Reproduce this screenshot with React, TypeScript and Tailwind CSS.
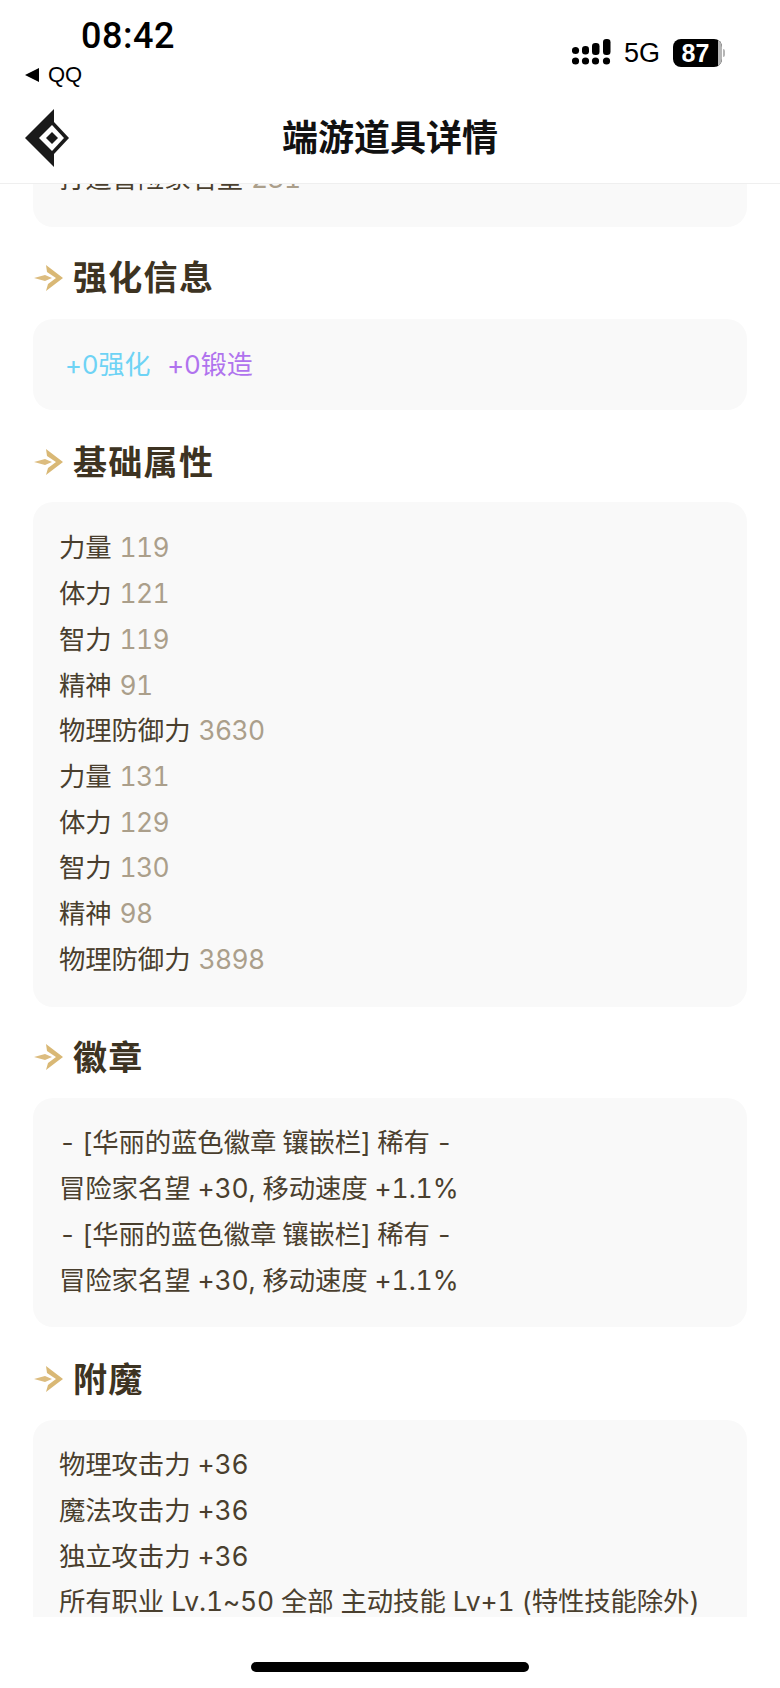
import React from 'react';

const cjk = { fontFamily: 'Inter, "Noto Sans CJK SC", sans-serif' };

function Logo() {
  return (
    <svg width="50" height="60" viewBox="0 0 50 60" className="shrink-0">
      <path d="M30 0 L30 13 L45 29 L30 45 L30 58 L1 29 Z" fill="#1a1a1a" />
      <path d="M28 16 L15 29 L28 42 L40 29 Z" fill="#fff" />
      <path d="M28 23 L22 29 L28 35 L34 29 Z" fill="#1a1a1a" />
    </svg>
  );
}

function ArrowMark() {
  return (
    <svg width="30" height="28" viewBox="0 0 30 28" className="shrink-0">
      <path d="M0 14 L11 11 L18 14 L11 17 Z" fill="#dcbc7f" />
      <path d="M12 1 L29 14 L12 27 L14 20 L22 14 L13 8 Z" fill="#d9b875" />
    </svg>
  );
}

function Heading({ title, mt }: { title: string; mt: string }) {
  return (
    <div className={`flex items-center h-[40px] pl-[34px] ${mt}`}>
      <ArrowMark />
      <h2 className="ml-[9px] text-[34px] font-bold text-[#3d3322] tracking-[1.3px]">{title}</h2>
    </div>
  );
}

function Card({ className, children }: { className?: string; children: React.ReactNode }) {
  return (
    <div className={`mx-[33px] bg-[#f9f9f9] rounded-[20px] px-[26px] text-[26.4px] leading-[45.7px] text-[#4a3f2e] tabular-nums tracking-[-0.1px] ${className ?? ''}`}>
      {children}
    </div>
  );
}

function Stat({ label, value }: { label: string; value: string }) {
  return (
    <div>
      {label} <span className="ml-[1px] text-[#ab9f8b] tracking-[-0.6px]">{value}</span>
    </div>
  );
}

const baseStats = [
  ['力量', '119'],
  ['体力', '121'],
  ['智力', '119'],
  ['精神', '91'],
  ['物理防御力', '3630'],
  ['力量', '131'],
  ['体力', '129'],
  ['智力', '130'],
  ['精神', '98'],
  ['物理防御力', '3898'],
];

export default function App() {
  return (
    <div className="w-[780px] h-[1688px] bg-white flex flex-col overflow-hidden" style={cjk}>
      {/* Status bar */}
      <div className="h-[100px] shrink-0 relative flex justify-between">
        <div className="pl-[25px]">
          <div className="pl-[56px] pt-[15px] text-[36px] leading-[42px] font-medium text-black tracking-[0.5px]" style={{ fontFamily: 'Roboto, sans-serif' }}>08:42</div>
          <div className="flex items-center gap-[9px] mt-[5px] text-[22px] leading-[26px] text-black" style={{ fontFamily: '"Liberation Sans", sans-serif' }}>
            <span className="w-0 h-0 border-y-[7px] border-y-transparent border-r-[14px] border-r-black" />
            QQ
          </div>
        </div>
        <div className="flex items-center h-[32px] mt-[37px] mr-[55px]">
          <svg width="39" height="28" viewBox="0 0 39 28">
            <circle cx="3.5" cy="11.5" r="3.6" fill="#000" />
            <circle cx="3.5" cy="22" r="3.6" fill="#000" />
            <rect x="10" y="7" width="7" height="8.5" rx="3.3" fill="#000" />
            <circle cx="13.5" cy="22" r="3.6" fill="#000" />
            <rect x="20" y="4" width="7.5" height="12" rx="3.3" fill="#000" />
            <circle cx="23.5" cy="22" r="3.6" fill="#000" />
            <rect x="31" y="0" width="7.5" height="16" rx="3.3" fill="#000" />
            <circle cx="34.5" cy="22" r="3.6" fill="#000" />
          </svg>
          <span className="ml-[13px] text-[27px] text-black" style={{ fontFamily: '"Liberation Sans", sans-serif' }}>5G</span>
          <div className="ml-[13px] relative w-[49px] h-[28px] rounded-[8px] bg-black flex items-center justify-center overflow-hidden">
            <span className="text-[25px] leading-none font-bold text-white pr-[4px]" style={{ fontFamily: '"Liberation Sans", sans-serif' }}>87</span>
            <span className="absolute right-0 inset-y-0 w-[4px] bg-[#b5b5b5]" />
          </div>
          <span className="ml-[1px] w-[2px] h-[8px] rounded-r bg-[#b5b5b5]" />
        </div>
      </div>

      {/* Title bar */}
      <div className="h-[84px] shrink-0 relative z-10 bg-white border-b border-[#efefef] flex items-center justify-center">
        <div className="absolute left-[24px] top-[9px]">
          <Logo />
        </div>
        <h1 className="text-[36px] font-bold text-[#111] -mt-[7px]">端游道具详情</h1>
      </div>

      {/* Scroll area */}
      <div className="h-[1433px] shrink-0 overflow-hidden">
        <Card className="-mt-[50px] pt-[22px] pb-[25px]">
          <Stat label="打造冒险家名望" value="231" />
        </Card>

        <Heading title="强化信息" mt="mt-[31px]" />
        <Card className="mt-[21px] py-[23px]">
          <div className="pl-[6px] flex gap-[17px] text-[26px]">
            <span className="text-[#6ed3f5]">+0强化</span>
            <span className="text-[#b073ee]">+0锻造</span>
          </div>
        </Card>

        <Heading title="基础属性" mt="mt-[32px]" />
        <Card className="mt-[20px] pt-[23px] pb-[25px]">
          {baseStats.map(([label, value], i) => (
            <Stat key={i} label={label} value={value} />
          ))}
        </Card>

        <Heading title="徽章" mt="mt-[30px]" />
        <Card className="mt-[21px] pt-[22px] pb-[24px]">
          <div className="[word-spacing:-1px]">- [华丽的蓝色徽章 镶嵌栏] 稀有 -</div>
          <div>冒险家名望 +30, 移动速度 +1.1%</div>
          <div className="[word-spacing:-1px]">- [华丽的蓝色徽章 镶嵌栏] 稀有 -</div>
          <div>冒险家名望 +30, 移动速度 +1.1%</div>
        </Card>

        <Heading title="附魔" mt="mt-[32px]" />
        <Card className="mt-[21px] pt-[22px] pb-[24px]">
          <div>物理攻击力 +36</div>
          <div>魔法攻击力 +36</div>
          <div>独立攻击力 +36</div>
          <div>所有职业 Lv.1~50 全部 主动技能 Lv+1 (特性技能除外)</div>
        </Card>
      </div>

      {/* Home indicator */}
      <div className="flex-1 flex justify-center pt-[45px]">
        <div className="w-[278px] h-[10px] rounded-full bg-black" />
      </div>
    </div>
  );
}
